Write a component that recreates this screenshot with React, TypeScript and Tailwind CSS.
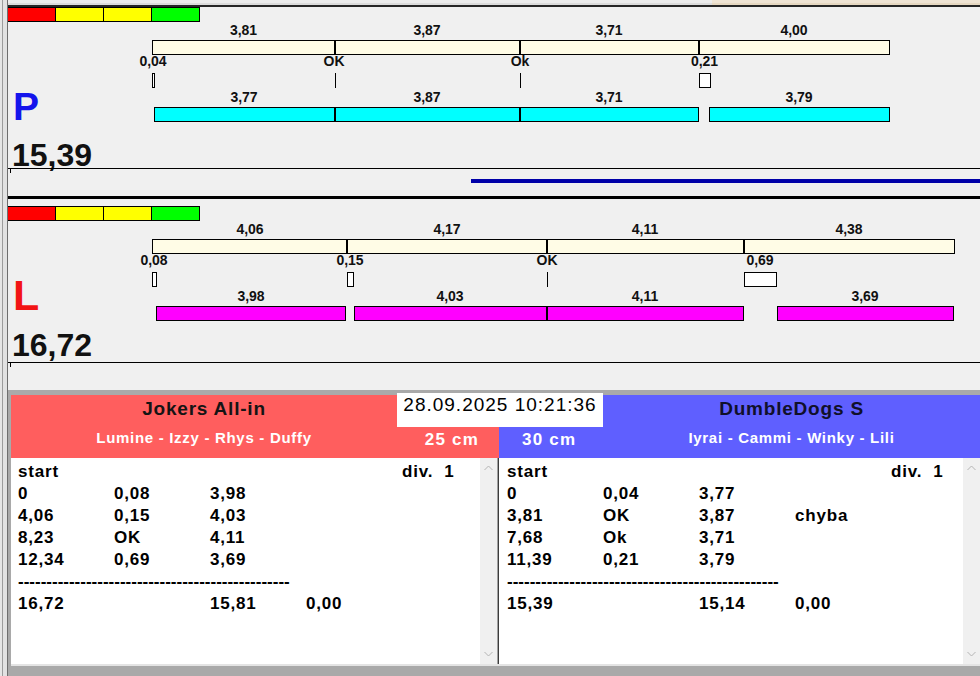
import React from 'react';

const OX = 138;
const FF = "'Liberation Sans', Arial, sans-serif";

type Label = [number, string];
type Seg = [number, number];
type Marker = ['box', number, number] | ['line', number];

function Lbl({ x, y, t }: { x: number; y: number; t: string }) {
  return (
    <text x={x - OX} y={y} textAnchor="middle" fill="#111" fontSize={14} fontWeight={700} fontFamily={FF} shapeRendering="auto">
      {t}
    </text>
  );
}

function Chart({
  top,
  cream,
  lower,
  markers,
  upper2,
  bars,
  color,
}: {
  top: Label[];
  cream: Seg[];
  lower: Label[];
  markers: Marker[];
  upper2: Label[];
  bars: Seg[];
  color: string;
}) {
  return (
    <svg width={842} height={100} className="block shrink-0" shapeRendering="crispEdges">
      {top.map(([x, t]) => (
        <Lbl key={'t' + x} x={x} y={13} t={t} />
      ))}
      {cream.map(([a, b]) => (
        <rect key={'c' + a} x={a - OX + 0.5} y={18.5} width={b - a} height={14} fill="#fffce6" stroke="#000" strokeWidth={1} />
      ))}
      {lower.map(([x, t]) => (
        <Lbl key={'l' + x} x={x} y={44} t={t} />
      ))}
      {markers.map((m, i) =>
        m[0] === 'box' ? (
          <rect key={'m' + i} x={m[1] - OX + 0.5} y={51.5} width={m[2] - m[1]} height={14} fill="#fff" stroke="#000" strokeWidth={1} />
        ) : (
          <rect key={'m' + i} x={m[1] - OX} y={51} width={1} height={15} fill="#000" />
        )
      )}
      {upper2.map(([x, t]) => (
        <Lbl key={'u' + x} x={x} y={80} t={t} />
      ))}
      {bars.map(([a, b]) => (
        <rect key={'b' + a} x={a - OX + 0.5} y={85.5} width={b - a} height={14} fill={color} stroke="#000" strokeWidth={1} />
      ))}
    </svg>
  );
}

function ColorBar() {
  return (
    <div className="flex h-[15px] w-[192px] border-y border-r border-black">
      <div className="flex-1 bg-[#ff0000]" />
      <div className="flex-1 bg-[#ffff00] border-l border-black" />
      <div className="flex-1 bg-[#ffff00] border-l border-black" />
      <div className="flex-1 bg-[#00ff00] border-l border-black" />
    </div>
  );
}

function Chevron({ up }: { up: boolean }) {
  return (
    <svg width={9} height={6} className="block">
      <polyline
        points={up ? '0.5,5 4.5,1 8.5,5' : '0.5,1 4.5,5 8.5,1'}
        fill="none"
        stroke="#b4b4b4"
        strokeWidth={1}
      />
    </svg>
  );
}

function Scrollbar() {
  return (
    <div className="w-[17px] bg-[#f0f0f0] flex flex-col items-center justify-between pt-[7px] pb-[7px]">
      <Chevron up />
      <Chevron up={false} />
    </div>
  );
}

type Row = string[];

function List({ rows, total }: { rows: Row[]; total: Row }) {
  const cell = 'whitespace-pre';
  return (
    <div className="grid grid-cols-[96px_96px_96px_96px_auto] text-[17px] leading-[22px] font-bold tracking-[0.8px] text-black">
      <span className={cell}>start</span>
      <span />
      <span />
      <span />
      <span className={cell}>div.  1</span>
      {rows.map((r, i) => (
        <React.Fragment key={i}>
          <span className={cell}>{r[0]}</span>
          <span className={cell}>{r[1]}</span>
          <span className={cell}>{r[2]}</span>
          <span className={cell}>{r[3] ?? ''}</span>
          <span />
        </React.Fragment>
      ))}
      <span className="col-span-5 whitespace-pre tracking-normal">
        {'------------------------------------------------'}
      </span>
      <span className={cell}>{total[0]}</span>
      <span className={cell}>{total[1]}</span>
      <span className={cell}>{total[2]}</span>
      <span className={cell}>{total[3]}</span>
      <span />
    </div>
  );
}

export default function App() {
  return (
    <div className="w-[980px] h-[676px] overflow-hidden flex bg-[#f0f0f0] font-['Liberation_Sans',Arial,sans-serif]">
      {/* left gutter */}
      <div className="w-[8px] h-full flex shrink-0">
        <div className="w-[2px] bg-[#e6e6e6]" />
        <div className="w-px bg-[#9c9c9c]" />
        <div className="w-[4px] bg-[#e2e2e2]" />
        <div className="w-px bg-[#6e6e6e]" />
      </div>

      {/* main column */}
      <div className="w-[972px] h-full flex flex-col">
        {/* top strip */}
        <div className="h-[5px] flex">
          <div className="w-[704px] bg-[#dcdcdc] border-t-[3px] border-[#ececec]" />
          <div className="flex-1 bg-[#e6d8c2] border-t-[3px] border-[#efe4d4]" />
        </div>
        <div className="h-[2px] bg-[#262626]" />

        {/* P panel */}
        <div className="h-[189px] flex flex-col">
          <ColorBar />
          <div className="flex h-[100px]">
            <div className="w-[130px] pl-[5px] pt-[65px]">
              <span className="block text-[39px] leading-none font-bold text-[#1414ec]">P</span>
            </div>
            <Chart
              top={[
                [243.5, '3,81'],
                [427, '3,87'],
                [609, '3,71'],
                [794, '4,00'],
              ]}
              cream={[
                [152, 334],
                [335, 519],
                [520, 698],
                [699, 889],
              ]}
              lower={[
                [153, '0,04'],
                [334, 'OK'],
                [520, 'Ok'],
                [704.5, '0,21'],
              ]}
              markers={[
                ['box', 152, 154],
                ['line', 335],
                ['line', 520],
                ['box', 699, 710],
              ]}
              upper2={[
                [244, '3,77'],
                [427, '3,87'],
                [609, '3,71'],
                [799, '3,79'],
              ]}
              bars={[
                [154, 334],
                [335, 519],
                [520, 698],
                [709, 889],
              ]}
              color="#00ffff"
            />
          </div>
          <div className="h-[46px] pt-[17px] pl-[4px]">
            <span className="block text-[32px] leading-none font-bold text-[#111]">15,39</span>
          </div>
          <div className="h-px bg-black" />
          <div className="flex-1 flex flex-col">
            <div className="ml-[2px] w-px h-[4px] bg-black" />
            <div className="ml-[463px] mt-[6px] h-[4px] bg-[#0000a8]" />
          </div>
        </div>

        <div className="h-[3px] bg-black" />

        {/* L panel */}
        <div className="h-[191px] flex flex-col">
          <div className="h-[7px]" />
          <ColorBar />
          <div className="flex h-[100px]">
            <div className="w-[130px] pl-[5px] pt-[53px]">
              <span className="block text-[43px] leading-none font-bold text-[#f21414]">L</span>
            </div>
            <Chart
              top={[
                [250, '4,06'],
                [447, '4,17'],
                [645, '4,11'],
                [849, '4,38'],
              ]}
              cream={[
                [152, 346],
                [347, 546],
                [547, 743],
                [744, 954],
              ]}
              lower={[
                [154, '0,08'],
                [350, '0,15'],
                [547, 'OK'],
                [760, '0,69'],
              ]}
              markers={[
                ['box', 152, 156],
                ['box', 347, 353],
                ['line', 547],
                ['box', 744, 776],
              ]}
              upper2={[
                [251, '3,98'],
                [450, '4,03'],
                [645, '4,11'],
                [865, '3,69'],
              ]}
              bars={[
                [156, 345],
                [354, 546],
                [547, 743],
                [777, 953],
              ]}
              color="#ff00ff"
            />
          </div>
          <div className="h-[41px] pt-[8px] pl-[4px]">
            <span className="block text-[32px] leading-none font-bold text-[#111]">16,72</span>
          </div>
          <div className="h-px bg-black" />
          <div className="flex-1 flex flex-col">
            <div className="ml-[2px] w-px h-[4px] bg-black" />
          </div>
        </div>

        {/* bottom section */}
        <div className="relative h-[286px] bg-[#a9a9a9] pl-[3px] pt-[5px] flex flex-col">
          <div className="flex h-[63px]">
            <div className="w-[488px] bg-[#ff5e5e] flex">
              <div className="flex-1 flex flex-col items-center pt-[4px]">
                <span className="block text-[19px] leading-none font-bold tracking-[0.8px] text-[#141414]">Jokers All-in</span>
                <span className="block mt-[12px] text-[15px] leading-none font-bold tracking-[0.7px] text-white">
                  Lumine - Izzy - Rhys - Duffy
                </span>
              </div>
              <div className="w-[102px] flex justify-end pr-[20px] pt-[36px]">
                <span className="block text-[17px] leading-none font-bold tracking-[1.2px] text-white">25 cm</span>
              </div>
            </div>
            <div className="flex-1 bg-[#5f5fff] flex">
              <div className="w-[104px] pl-[23px] pt-[36px]">
                <span className="block text-[17px] leading-none font-bold tracking-[1.2px] text-white">30 cm</span>
              </div>
              <div className="flex-1 flex flex-col items-center pt-[4px]">
                <span className="block text-[19px] leading-none font-bold tracking-[0.8px] text-[#10102a]">DumbleDogs S</span>
                <span className="block mt-[12px] text-[15px] leading-none font-bold tracking-[0.7px] text-white">
                  Iyrai - Cammi - Winky - Lili
                </span>
              </div>
            </div>
          </div>

          <div className="flex h-[206px]">
            <div className="w-[469px] bg-white pl-[7px] pt-[3px]">
              <List
                rows={[
                  ['0', '0,08', '3,98'],
                  ['4,06', '0,15', '4,03'],
                  ['8,23', 'OK', '4,11'],
                  ['12,34', '0,69', '3,69'],
                ]}
                total={['16,72', '', '15,81', '0,00']}
              />
            </div>
            <Scrollbar />
            <div className="w-px bg-[#a0a0a0]" />
            <div className="w-px bg-[#3c3c3c]" />
            <div className="w-[464px] bg-white pl-[8px] pt-[3px]">
              <List
                rows={[
                  ['0', '0,04', '3,77'],
                  ['3,81', 'OK', '3,87', 'chyba'],
                  ['7,68', 'Ok', '3,71'],
                  ['11,39', '0,21', '3,79'],
                ]}
                total={['15,39', '', '15,14', '0,00']}
              />
            </div>
            <Scrollbar />
          </div>
          <div className="h-[2px] bg-[#e4e4e4]" />

          {/* date overlay */}
          <div className="absolute left-[389px] top-[3px] w-[206px] h-[34px] bg-white flex justify-center pt-[2px]">
            <span className="block text-[19px] leading-none tracking-[1px] text-black">28.09.2025 10:21:36</span>
          </div>
        </div>
      </div>
    </div>
  );
}
